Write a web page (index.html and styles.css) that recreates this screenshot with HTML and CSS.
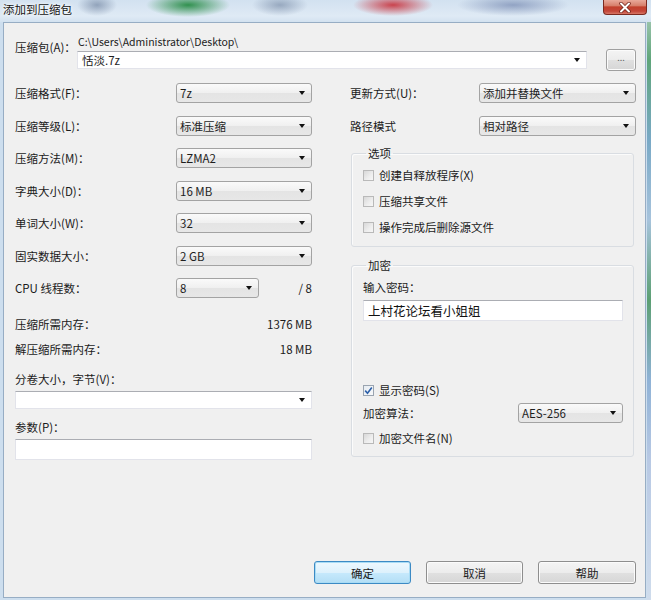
FILE: index.html
```html
<!DOCTYPE html>
<html lang="zh-CN">
<head>
<meta charset="utf-8">
<title>添加到压缩包</title>
<link rel="stylesheet" href="styles.css">
</head>
<body>
<div class="window">
  <div class="titlebar">
    <span class="title">添加到压缩包</span>
    <span class="close"><svg width="14" height="11" viewBox="0 0 14 11"><path d="M3 1.5 L11 9.5 M11 1.5 L3 9.5" stroke="#6b1f17" stroke-width="3.4" stroke-linecap="round"/><path d="M3 1.5 L11 9.5 M11 1.5 L3 9.5" stroke="#ffffff" stroke-width="2" stroke-linecap="round"/></svg></span>
  </div>
  <div class="client">
    <div class="archive">
      <span class="label archive-label">压缩包(A)：</span>
      <div class="path">C:\Users\Administrator\Desktop\</div>
      <div class="edit-combo archive-combo"><span>恬淡.7z</span><i class="arrow"></i></div>
      <button class="btn browse">...</button>
    </div>

    <div class="columns">
      <div class="col left">
        <div class="row"><span class="label">压缩格式(F)：</span><div class="combo"><span>7z</span><i class="arrow"></i></div></div>
        <div class="row"><span class="label">压缩等级(L)：</span><div class="combo"><span>标准压缩</span><i class="arrow"></i></div></div>
        <div class="row"><span class="label">压缩方法(M)：</span><div class="combo"><span>LZMA2</span><i class="arrow"></i></div></div>
        <div class="row"><span class="label">字典大小(D)：</span><div class="combo"><span>16 MB</span><i class="arrow"></i></div></div>
        <div class="row"><span class="label">单词大小(W)：</span><div class="combo"><span>32</span><i class="arrow"></i></div></div>
        <div class="row"><span class="label">固实数据大小：</span><div class="combo"><span>2 GB</span><i class="arrow"></i></div></div>
        <div class="row cpu-row"><span class="label">CPU 线程数：</span><div class="combo"><span>8</span><i class="arrow"></i></div><span class="value">/ 8</span></div>
        <div class="mem-row first"><span class="label">压缩所需内存：</span><span class="value">1376 MB</span></div>
        <div class="mem-row"><span class="label">解压缩所需内存：</span><span class="value">18 MB</span></div>
        <div class="label block-label split-label">分卷大小，字节(V)：</div>
        <div class="edit-combo split-combo"><span></span><i class="arrow"></i></div>
        <div class="label block-label param-label">参数(P)：</div>
        <div class="textbox param-box"></div>
      </div>

      <div class="col right">
        <div class="row rrow"><span class="label">更新方式(U)：</span><div class="combo"><span>添加并替换文件</span><i class="arrow"></i></div></div>
        <div class="row rrow"><span class="label">路径模式</span><div class="combo"><span>相对路径</span><i class="arrow"></i></div></div>

        <fieldset class="group options">
          <legend>选项</legend>
          <div class="check-row"><span class="checkbox"></span><span>创建自释放程序(X)</span></div>
          <div class="check-row"><span class="checkbox"></span><span>压缩共享文件</span></div>
          <div class="check-row"><span class="checkbox"></span><span>操作完成后删除源文件</span></div>
        </fieldset>

        <fieldset class="group encrypt">
          <legend>加密</legend>
          <div class="label pw-label">输入密码：</div>
          <div class="textbox pw-box">上村花论坛看小姐姐</div>
          <div class="check-row show-pw"><span class="checkbox checked"><svg width="9" height="9" viewBox="0 0 9 9"><path d="M1.2 4.6 L3.5 7.2 L7.8 1.4" fill="none" stroke="#2c5fa8" stroke-width="1.6"/></svg></span><span>显示密码(S)</span></div>
          <div class="algo-row"><span class="label">加密算法：</span><div class="combo"><span>AES-256</span><i class="arrow"></i></div></div>
          <div class="check-row enc-name"><span class="checkbox"></span><span>加密文件名(N)</span></div>
        </fieldset>
      </div>
    </div>

    <div class="buttons">
      <button class="btn default">确定</button>
      <button class="btn">取消</button>
      <button class="btn help">帮助</button>
    </div>
  </div>
</div>
</body>
</html>
```
FILE: styles.css
```css
* { box-sizing: border-box; }

html, body {
  margin: 0;
  padding: 0;
  background: #cfdfee;
}

body {
  font-family: "Noto Sans CJK SC", "Noto Sans", sans-serif;
  font-size: 11.5px;
  color: #1b1b1b;
}

.window {
  width: 651px;
  height: 600px;
  overflow: hidden;
  background:
    linear-gradient(to bottom, #b9d3c4 0px, #5fa57a 60px, #79a9c6 140px, #a7c3dc 220px, #5c9f73 300px, #8fb2d6 380px, #b8c9e4 460px, #cfdcec 600px) right top / 4px 100% no-repeat,
    #cddeee;
}

/* ---------- title bar ---------- */
.titlebar {
  height: 22px;
  display: flex;
  align-items: flex-start;
  padding-left: 3px;
  background:
    radial-gradient(20px 11px at 97px 5px, rgba(100, 120, 150, 0.6), rgba(100, 120, 150, 0)),
    radial-gradient(42px 12px at 188px 5px, rgba(40, 140, 70, 0.95), rgba(40, 140, 70, 0)),
    radial-gradient(28px 11px at 280px 5px, rgba(100, 120, 150, 0.55), rgba(100, 120, 150, 0)),
    radial-gradient(40px 11px at 393px 5px, rgba(200, 50, 60, 0.9), rgba(200, 50, 60, 0)),
    radial-gradient(56px 11px at 513px 5px, rgba(100, 120, 165, 0.6), rgba(100, 120, 165, 0)),
    linear-gradient(#d2e1f0, #dfeaf5 16px, #d3e2f0);
}

.title {
  line-height: 19px;
  font-size: 11.5px;
  color: #141414;
  text-shadow: 0 0 6px #ffffff, 0 0 3px #ffffff;
}

.close {
  margin-left: auto;
  margin-right: 4px;
  width: 44px;
  height: 15px;
  border: 1px solid #7b2a20;
  border-top: none;
  border-radius: 0 0 4px 4px;
  background: linear-gradient(#e9a99a 0%, #d7806c 40%, #c2402c 50%, #c4473a 80%, #d77766 100%);
  display: flex;
  align-items: center;
  justify-content: center;
}

/* ---------- client area ---------- */
.client {
  margin-left: 3px;
  width: 643px;
  height: 576px;
  border: 1px solid #97adc4;
  background: #f0f0f0;
  padding: 12px 9px 13px 11px;
  display: flex;
  flex-direction: column;
}

.label { white-space: nowrap; line-height: 16px; }

/* archive row */
.archive {
  display: grid;
  grid-template-columns: 62px 510px 19px 30px;
  grid-template-rows: 14px 22px;
}

.archive-label {
  grid-row: 1 / 3;
  grid-column: 1;
  padding-top: 4px;
}

.path {
  grid-row: 1;
  grid-column: 2;
  padding-left: 1px;
  line-height: 14px;
  font-size: 10.5px;
  color: #222;
  white-space: nowrap;
}

.archive-combo {
  grid-row: 2;
  grid-column: 2;
  margin-top: 2px;
  height: 18px;
}

/* columns */
.columns {
  margin-top: 6px;
  display: grid;
  grid-template-columns: 297px 286px;
  column-gap: 38px;
}

.col { display: flex; flex-direction: column; }

.row {
  height: 32.5px;
  display: grid;
  grid-template-columns: 161px 136px;
  align-items: center;
}

.cpu-row { grid-template-columns: 161px 83px 53px; }

.rrow { grid-template-columns: 129px 157px; }

.value { text-align: right; white-space: nowrap; }

.mem-row {
  height: 25px;
  display: flex;
  align-items: center;
  justify-content: space-between;
}
.mem-row.first { margin-top: 7px; }

.block-label { line-height: 16px; }
.split-label { margin-top: 9.5px; }
.param-label { margin-top: 10px; }

.split-combo { margin-top: 4px; height: 18px; }
.param-box { margin-top: 4px; height: 21px; }

/* combos */
.combo {
  height: 20px;
  display: flex;
  align-items: center;
  padding: 0 6px 0 3px;
  border: 1px solid #a3a3a3;
  border-radius: 3px;
  background: linear-gradient(#fafafa 0%, #f0f0f0 48%, #e4e4e4 52%, #e7e7e7 100%);
  color: #1e1e1e;
  white-space: nowrap;
}

.edit-combo {
  display: flex;
  align-items: center;
  padding: 0 6px 0 4px;
  background: #ffffff;
  border: 1px solid #e2e3ea;
  border-top-color: #abadb3;
  color: #1e1e1e;
}

.arrow {
  margin-left: auto;
  width: 0;
  height: 0;
  border-left: 3.5px solid transparent;
  border-right: 3.5px solid transparent;
  border-top: 4px solid #111;
}

.textbox {
  background: #ffffff;
  border: 1px solid #e2e3ea;
  border-top-color: #abadb3;
}

/* group boxes */
.group {
  margin: 0 2px 0 1px;
  padding: 0 10px 0 11px;
  border: 1px solid #d9dde2;
  border-radius: 3px;
  box-shadow: inset 1px 1px 0 #fbfbfb;
  min-width: 0;
}

.group legend {
  margin-left: 3px;
  padding: 0 2px;
  line-height: 16px;
  font-size: 11.5px;
}

.options { margin-top: 3px; padding-top: 1px; padding-bottom: 6px; }
.options .check-row { height: 26px; }

.encrypt { margin-top: 10px; padding-bottom: 10px; }

.check-row {
  display: flex;
  align-items: center;
  gap: 5px;
  line-height: 16px;
  white-space: nowrap;
}

.checkbox {
  width: 11px;
  height: 11px;
  flex: none;
  border: 1px solid #b9b9b9;
  background: linear-gradient(135deg, #d8d8d8, #eeeeee 60%, #f6f6f6);
  display: flex;
  align-items: center;
  justify-content: center;
}
.checkbox.checked {
  border-color: #9aa4b0;
  background: linear-gradient(135deg, #e6ecf2, #f8f9fb);
}

.pw-label { margin-top: 6px; }
.pw-box {
  margin-top: 5px;
  height: 21px;
  padding-left: 4px;
  font-size: 12.5px;
  line-height: 19px;
  color: #111;
}

.show-pw { margin-top: 61px; height: 16px; }

.algo-row {
  margin-top: 5px;
  height: 20px;
  display: grid;
  grid-template-columns: 155px 105px;
  align-items: center;
}

.enc-name { margin-top: 7px; height: 16px; }

/* buttons */
.buttons {
  margin-top: auto;
  display: flex;
  justify-content: flex-end;
  gap: 15px;
}

.btn {
  font-family: "Noto Sans CJK SC", "Noto Sans", sans-serif;
  font-size: 11.5px;
  color: #1b1b1b;
  height: 23px;
  width: 97px;
  border: 1px solid #8e8e8e;
  border-radius: 3px;
  background: linear-gradient(#f4f4f4 0%, #ececec 50%, #e0e0e0 52%, #d6d6d6 100%);
  box-shadow: inset 0 0 0 1px #fbfbfb;
  padding: 0;
  line-height: 20px;
}

.btn.help { width: 98px; }

.btn.browse {
  grid-row: 2;
  grid-column: 4;
  width: 30px;
  height: 22px;
  font-size: 9px;
  line-height: 14px;
  color: #666;
  padding: 0 0 4px 0;
  border-color: #a0a0a0;
}

.btn.default {
  border-color: #3c8ac4;
  background: linear-gradient(#eef8fe 0%, #ddf1fc 50%, #c6e9fc 52%, #b3def5 100%);
  box-shadow: inset 0 0 0 1px #a9dcf5;
}
```
